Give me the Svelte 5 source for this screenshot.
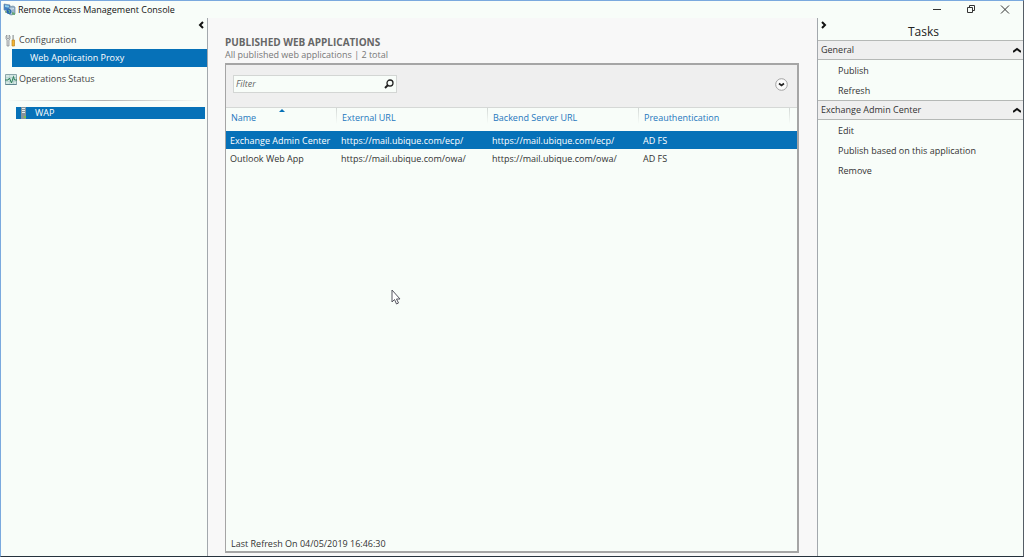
<script>
	let filter = $state('');
	let selected = $state(0);
	let showGeneral = $state(true);
	let showApp = $state(true);

	const columns = ['Name', 'External URL', 'Backend Server URL', 'Preauthentication'];

	const apps = [
		{
			name: 'Exchange Admin Center',
			external: 'https://mail.ubique.com/ecp/',
			backend: 'https://mail.ubique.com/ecp/',
			auth: 'AD FS'
		},
		{
			name: 'Outlook Web App',
			external: 'https://mail.ubique.com/owa/',
			backend: 'https://mail.ubique.com/owa/',
			auth: 'AD FS'
		}
	];

	const visible = $derived(
		apps.filter((app) => app.name.toLowerCase().includes(filter.toLowerCase()))
	);
</script>

{#snippet chevron(d)}
	<svg width="8" height="8" viewBox="0 0 8 8" fill="none" stroke="#111" stroke-width="2">
		<path {d} />
	</svg>
{/snippet}

<div class="window">
	<header class="titlebar">
		<svg width="13" height="13" viewBox="0 0 13 13">
			<path d="M1 1l6 1v6L1 7z" fill="#3f7fc4" stroke="#6d8ba8" stroke-width=".7" />
			<path d="M2 2l4 .7v2L2 4z" fill="#8ed0ee" />
			<path d="M2 8l4 1v1.500l-4-1z" fill="#76a56c" />
			<path d="M6 4l4-1 2 1v7l-4 1-2-1z" fill="#9bb6ca" stroke="#587a99" stroke-width=".6" />
			<path d="M8 5v6M9 6l2-.5" stroke="#e8f4fb" stroke-width=".8" />
			<circle cx="6" cy="8.500" r="2.500" fill="#2764b5" />
			<path d="M5 7l2 1-1 2" stroke="#66b77f" fill="none" />
			<path d="M9 9l3 1v2l-3-.5z" fill="#67a876" />
		</svg>
		<h1>Remote Access Management Console</h1>
		<div class="controls">
			<button aria-label="Minimize">
				<svg width="10" height="10" viewBox="0 0 10 10" fill="none" stroke="#333">
					<path d="M1 4.500h8" />
				</svg>
			</button>
			<button aria-label="Restore">
				<svg width="10" height="10" viewBox="0 0 10 10" fill="none" stroke="#333">
					<path d="M1.500 2.500h5v5h-5zM3.500 2.500v-2h5v5h-2" />
				</svg>
			</button>
			<button aria-label="Close">
				<svg width="10" height="10" viewBox="0 0 10 10" fill="none" stroke="#333">
					<path d="M1 .5l8 8M9 .5l-8 8" />
				</svg>
			</button>
		</div>
	</header>

	<div class="body">
		<nav class="sidebar">
			<button class="collapse" aria-label="Collapse navigation">
				{@render chevron('M6 1L3 4l3 3')}
			</button>
			<a class="item" href="#configuration">
				<svg width="12" height="13" viewBox="0 0 12 13">
					<path
						d="M2 1v3l1 1 1-1V1l1 1v3L4 6v6H2V6L1 5V2z"
						fill="#d9dcdd"
						stroke="#83888a"
						stroke-width=".7"
					/>
					<path d="M7.500 1h1.200v5H7.500z" fill="#8f9597" />
					<path d="M7 6h2.500v6H7z" fill="#f2b632" stroke="#bd8424" stroke-width=".7" />
				</svg>
				Configuration
			</a>
			<a class="item active" href="#proxy">Web Application Proxy</a>
			<a class="item" href="#status">
				<svg width="12" height="11" viewBox="0 0 12 11">
					<path d="M.5.5h11v10H.5z" fill="#d3e8e2" stroke="#8ba6aa" />
					<path d="M.5 10.500h11" stroke="#5f858f" />
					<path d="M1 3.500h10M1 7.500h10M4.500 1v9M8.500 1v9" stroke="#aec8cb" stroke-width=".6" />
					<path d="M0 6h3l1.500-2L6.500 9l2-6.500 1 3.500H12" fill="none" stroke="#2c7f58" />
				</svg>
				Operations Status
			</a>
			<hr />
			<a class="server" href="#wap">
				<svg width="7" height="12" viewBox="0 0 7 12">
					<path d="M1 0h5v12H1z" fill="#87949b" />
					<path d="M2 1.500h3M2 3.500h3M2 5.500h3" stroke="#e3eaed" />
					<path d="M4 9h2v2H4z" fill="#79c04f" />
				</svg>
				WAP
			</a>
		</nav>

		<main>
			<h2>PUBLISHED WEB APPLICATIONS</h2>
			<p class="summary">All published web applications | 2 total</p>
			<section class="panel">
				<div class="toolbar">
					<label class="search">
						<input type="text" placeholder="Filter" aria-label="Filter" bind:value={filter} />
						<svg width="10" height="10" viewBox="0 0 10 10" fill="none" stroke="#222">
							<circle cx="6" cy="4" r="3" stroke-width="1.300" />
							<path d="M4 6L1 9" stroke-width="2" />
						</svg>
					</label>
					<button class="expand" aria-label="Show filter options">
						<svg width="13" height="13" viewBox="0 0 13 13" fill="none">
							<circle cx="6.500" cy="6.500" r="5.800" fill="#fbfbfb" stroke="#a2a2a2" />
							<path d="M4 5.500l2.500 2 2.500-2" stroke="#222" stroke-width="1.700" />
						</svg>
					</button>
				</div>
				<table>
					<thead>
						<tr>
							{#each columns as column, i}
								<th class:sorted={i === 0}>{column}</th>
							{/each}
							<td></td>
						</tr>
					</thead>
					<tbody>
						{#each visible as app, i}
							<tr class:selected={selected === i} onclick={() => (selected = i)}>
								<td>{app.name}</td>
								<td>{app.external}</td>
								<td>{app.backend}</td>
								<td>{app.auth}</td>
								<td></td>
							</tr>
						{/each}
					</tbody>
				</table>
				<footer>Last Refresh On 04/05/2019 16:46:30</footer>
			</section>
		</main>

		<aside>
			<div class="tasks-head">
				<button class="collapse" aria-label="Collapse tasks">
					{@render chevron('M2 1l3 3-3 3')}
				</button>
				<h2>Tasks</h2>
			</div>
			<button class="group" onclick={() => (showGeneral = !showGeneral)}>
				General
				{@render chevron(showGeneral ? 'M0 6l4-3 4 3' : 'M0 2l4 3 4-3')}
			</button>
			{#if showGeneral}
				<div class="tasks">
					<button>Publish</button>
					<button>Refresh</button>
				</div>
			{/if}
			<button class="group" onclick={() => (showApp = !showApp)}>
				Exchange Admin Center
				{@render chevron(showApp ? 'M0 6l4-3 4 3' : 'M0 2l4 3 4-3')}
			</button>
			{#if showApp}
				<div class="tasks">
					<button>Edit</button>
					<button>Publish based on this application</button>
					<button>Remove</button>
				</div>
			{/if}
		</aside>
	</div>

	<svg class="cursor" width="10" height="16" viewBox="0 0 10 16">
		<path
			d="M1 1v12l2.500-2.500L5.500 15l2-1-2-4H9z"
			fill="#fff"
			stroke="#54545e"
		/>
	</svg>
</div>

<style>
	:global(body) {
		margin: 0;
	}
	.window {
		position: relative;
		display: flex;
		flex-direction: column;
		box-sizing: border-box;
		height: 100vh;
		background: #f8fdf9;
		border: 1px solid #7aa9de;
		border-right-color: #555d66;
		border-bottom-color: #26323d;
		font-family: 'Open Sans', 'Segoe UI', sans-serif;
		font-size: 9px;
		line-height: 12px;
		color: #333;
	}
	h1,
	h2,
	p {
		margin: 0;
	}
	button {
		padding: 0;
		border: none;
		background: none;
		font: inherit;
		color: inherit;
		text-align: left;
	}
	svg {
		display: block;
		flex: none;
	}
	.titlebar {
		display: flex;
		align-items: center;
		gap: 2px;
		height: 17px;
		padding-left: 2px;
	}
	h1 {
		font-size: 9px;
		font-weight: 400;
		color: #111;
	}
	.controls {
		display: flex;
		gap: 24px;
		margin-left: auto;
		padding-right: 13px;
	}
	.body {
		display: flex;
		flex: 1;
		min-height: 0;
	}
	.sidebar {
		display: flex;
		flex-direction: column;
		box-sizing: border-box;
		width: 207px;
		border-right: 1px solid #a3a8ad;
	}
	.collapse {
		align-self: flex-end;
		padding: 3px 2px 2px;
	}
	.item {
		display: flex;
		align-items: center;
		gap: 2px;
		height: 18px;
		padding-left: 4px;
		color: #444;
		text-decoration: none;
	}
	.active {
		margin: 0 0 3px 11px;
		padding-left: 18px;
		background: #0671b8;
		color: #fff;
	}
	hr {
		width: 196px;
		height: 1px;
		margin: 12px auto 6px;
		border: none;
		background: linear-gradient(90deg, transparent, #b0b0b0, transparent);
	}
	.server {
		display: flex;
		align-items: center;
		gap: 8px;
		height: 12px;
		margin: 0 2px 0 15px;
		padding-left: 4px;
		background: #0671b8;
		color: #fff;
		text-decoration: none;
	}
	main {
		display: flex;
		flex: 1;
		flex-direction: column;
		min-width: 0;
		padding: 17px 18px 3px 17px;
		background: #f8f8f8;
	}
	main h2 {
		font-size: 10px;
		line-height: 14px;
		color: #666;
	}
	.summary {
		color: #777;
	}
	.panel {
		display: flex;
		flex: 1;
		flex-direction: column;
		margin-top: 2px;
		border: 2px solid #a5a5a5;
		border-left-width: 1px;
		background: #f8fdf9;
	}
	.toolbar {
		display: flex;
		align-items: center;
		justify-content: space-between;
		height: 43px;
		padding: 0 9px 0 7px;
		border-bottom: 1px solid #d5d8d6;
		background: #efefef;
		box-sizing: border-box;
	}
	.search {
		display: flex;
		align-items: center;
		box-sizing: border-box;
		width: 164px;
		height: 18px;
		margin-bottom: 4px;
		padding: 0 2px;
		border: 1px solid #d3d6d4;
		background: #f8fdf9;
	}
	.search input {
		flex: 1;
		min-width: 0;
		padding: 0;
		border: none;
		outline: none;
		background: none;
		font: inherit;
	}
	.search input::placeholder {
		font-style: italic;
		color: #666;
		opacity: 1;
	}
	.expand {
		margin-bottom: 4px;
	}
	table {
		width: 100%;
		border-collapse: collapse;
		table-layout: fixed;
	}
	th,
	td {
		height: 18px;
		padding: 0 0 0 4px;
		text-align: left;
		white-space: nowrap;
	}
	th {
		position: relative;
		width: 151px;
		height: 23px;
		padding: 0 0 4px 5px;
		box-sizing: border-box;
		background: linear-gradient(#d3d8d5, #f8fdf9) right top / 1px 16px no-repeat;
		font-weight: 400;
		color: #2577bd;
	}
	.sorted {
		width: 111px;
	}
	.sorted::after {
		content: '';
		position: absolute;
		top: 1px;
		left: 48%;
		border: 3px solid transparent;
		border-top: none;
		border-bottom-color: #0671b8;
	}
	tbody td {
		box-sizing: border-box;
		padding-top: 1px;
	}
	td:last-child {
		padding: 0;
	}
	.selected {
		background: #0671b8;
		color: #fff;
	}
	footer {
		margin-top: auto;
		padding: 0 5px 1px;
	}
	aside {
		box-sizing: border-box;
		width: 206px;
		border-left: 1px solid #a3a8ad;
	}
	.tasks-head {
		display: flex;
		align-items: flex-start;
		height: 22px;
	}
	.tasks-head .collapse {
		align-self: flex-start;
	}
	.tasks-head h2 {
		flex: 1;
		padding: 7px 6px 0 0;
		font-size: 12px;
		font-weight: 400;
		line-height: 14px;
		text-align: center;
		color: #222;
	}
	.group {
		display: flex;
		align-items: center;
		justify-content: space-between;
		box-sizing: border-box;
		width: 100%;
		height: 20px;
		padding: 0 2px 0 3px;
		border: solid #b5b8b6;
		border-width: 1px 0;
		background: #efefef;
	}
	.tasks {
		display: flex;
		flex-direction: column;
		align-items: flex-start;
		gap: 8px;
		padding: 5px 0 3px 20px;
	}
	.cursor {
		position: absolute;
		top: 288px;
		left: 390px;
	}
</style>
